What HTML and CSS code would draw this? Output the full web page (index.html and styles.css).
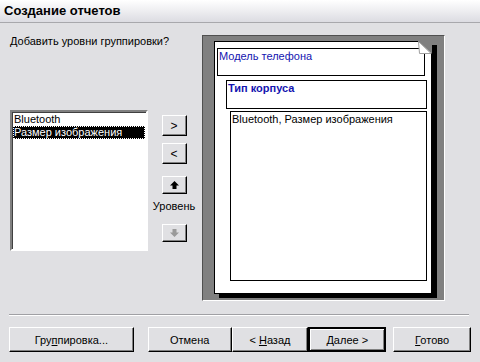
FILE: index.html
```html
<!DOCTYPE html>
<html lang="ru">
<head>
  <meta charset="UTF-8">
  <title>Создание отчетов</title>
  <link rel="stylesheet" href="styles.css">
</head>
<body>
  <div class="titlebar">Создание отчетов</div>

  <div class="main">
    <div class="col-left">
      <div class="prompt">Добавить уровни группировки?</div>
      <div class="picker">
        <div class="listbox">
          <div class="item">Bluetooth</div>
          <div class="item selected">Размер изображения</div>
        </div>
        <div class="side-buttons">
          <button class="btn small">&gt;</button>
          <button class="btn small second">&lt;</button>
          <button class="btn arrow up">
            <svg width="9" height="8" viewBox="0 0 9 8"><path d="M4.5 0 L9 4.5 H6.5 V8 H2.5 V4.5 H0 Z" fill="#000"/></svg>
          </button>
          <div class="level-label">Уровень</div>
          <button class="btn arrow down" disabled>
            <svg width="9" height="8" viewBox="0 0 9 8"><path d="M2.5 0 H6.5 V3.5 H9 L4.5 8 L0 3.5 H2.5 Z" fill="#9a9a9a"/></svg>
          </button>
        </div>
      </div>
    </div>

    <div class="preview">
      <div class="page">
        <svg class="fold" width="14" height="13" viewBox="0 0 14 13">
          <path d="M0 0 H14 V13 Z" fill="#808080"/>
          <path d="M0.5 0.5 L13 12.5 H1.5 Z" fill="#fff" stroke="#a0a0a0"/>
        </svg>
        <div class="box level1">Модель телефона</div>
        <div class="box level2">Тип корпуса</div>
        <div class="box level3">Bluetooth, Размер изображения</div>
      </div>
    </div>
  </div>

  <div class="footer">
    <div class="separator"></div>
    <div class="buttons">
      <button class="btn wide">Гру<u>п</u>пировка...</button>
      <button class="btn cancel">Отмена</button>
      <button class="btn back">&lt; <u>Н</u>азад</button>
      <button class="btn next default"><u>Д</u>алее &gt;</button>
      <button class="btn finish"><u>Г</u>отово</button>
    </div>
  </div>
</body>
</html>
```

FILE: styles.css
```css
body {
  margin: 0;
  width: 480px;
  height: 362px;
  background: #e0e0e3;
  font-family: "Liberation Sans", Arial, sans-serif;
  font-size: 11px;
  color: #000;
  overflow: hidden;
}

.titlebar {
  height: 22px;
  line-height: 22px;
  padding-left: 4px;
  font-size: 13px;
  font-weight: bold;
  background: linear-gradient(to bottom, #ffffff, #dcdce2);
  border-bottom: 1px solid #a8a8ac;
}

.main {
  display: flex;
  padding: 11px 0 0 10px;
}

.col-left {
  width: 192px;
}

.prompt {
  height: 14px;
  margin-top: 1px;
}

.picker {
  display: flex;
  margin-top: 61px;
}

.listbox {
  width: 133px;
  height: 136px;
  background: #fff;
  border: 2px solid;
  border-color: #808080 #fff #fff #808080;
  box-shadow: inset 1px 1px 0 #404040;
  padding: 1px 0 0 1px;
}

.item {
  height: 13px;
  line-height: 13px;
  padding-left: 1px;
  white-space: nowrap;
}

.item.selected {
  background: #000;
  color: #fff;
  outline: 1px dotted #fff;
  outline-offset: -1px;
  margin-right: 1px;
}

.side-buttons {
  display: flex;
  flex-direction: column;
  align-items: center;
  width: 44px;
  margin-left: 4px;
  padding-top: 5px;
}

.btn {
  font-family: "Liberation Sans", Arial, sans-serif;
  font-size: 11px;
  color: #000;
  background: #e0e0e3;
  border: 1px solid;
  border-color: #fff #000 #000 #fff;
  box-shadow: inset -1px -1px 0 #808080;
  padding: 0;
  margin: 0;
}

.btn.small {
  width: 25px;
  height: 21px;
  font-size: 12px;
}

.btn.second {
  margin-top: 7px;
}

.btn.arrow {
  width: 25px;
  height: 18px;
  display: flex;
  align-items: center;
  justify-content: center;
}

.btn.up {
  margin-top: 12px;
}

.level-label {
  margin-top: 6px;
  height: 14px;
}

.btn.down {
  margin-top: 10px;
}

.preview {
  margin-top: 1px;
  background: #808080;
  border: 1px solid;
  border-color: #505050 #fff #fff #505050;
  padding: 5px 0 0 11px;
  box-sizing: border-box;
  width: 243px;
  height: 266px;
}

.page {
  position: relative;
  width: 216px;
  height: 251px;
  background: #fff;
  border: 1px solid #000;
  box-shadow: 5px 4px 0 #000;
  display: flex;
  flex-direction: column;
  align-items: flex-start;
}

.fold {
  position: absolute;
  top: -1px;
  right: -1px;
}

.box {
  border: 1px solid #000;
  padding: 1px 0 0 1px;
  box-sizing: border-box;
  white-space: nowrap;
}

.level1 {
  margin: 6px 0 0 2px;
  width: 208px;
  height: 28px;
  color: #1414b0;
}

.level2 {
  margin: 4px 0 0 11px;
  width: 201px;
  height: 29px;
  color: #1414b0;
  font-weight: bold;
}

.level3 {
  margin: 2px 0 0 15px;
  width: 197px;
  height: 170px;
}

.footer {
  padding: 13px 9px 0 9px;
}

.separator {
  width: 460px;
  border-top: 1px solid #a0a0a4;
  border-bottom: 1px solid #fff;
}

.buttons {
  display: flex;
  margin-top: 11px;
}

.buttons .btn {
  height: 25px;
}

.btn.wide {
  width: 125px;
}

.btn.cancel {
  width: 84px;
  margin-left: 14px;
}

.btn.back {
  width: 77px;
}

.btn.next {
  width: 78px;
}

.btn.default {
  border: 2px solid #000;
  box-shadow: inset 1px 1px 0 #fff, inset -1px -1px 0 #808080;
}

.btn.finish {
  width: 78px;
  margin-left: 7px;
}
```
